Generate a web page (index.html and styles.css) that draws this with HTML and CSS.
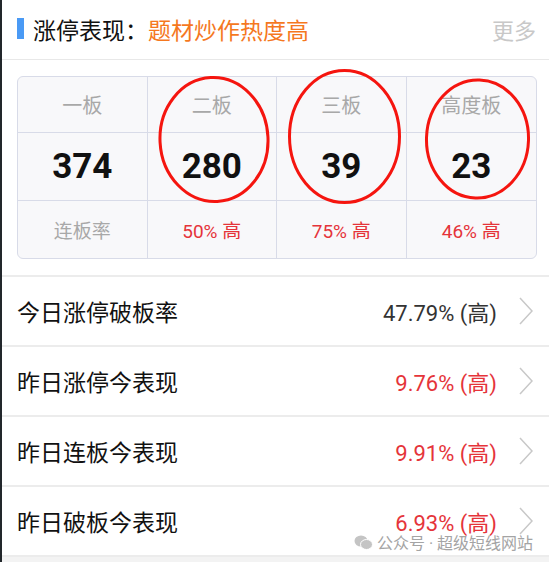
FILE: index.html
```html
<!DOCTYPE html>
<html>
<head>
  <meta charset="UTF-8">
  <title>涨停表现</title>
  <link rel="stylesheet" href="styles.css">
</head>
<body>
<div class="page">
  <div class="hd">
    <span class="bar"></span>
    <h1>涨停表现：<span>题材炒作热度高</span></h1>
    <a class="more" href="#">更多</a>
  </div>
  <div class="board">
    <div class="grid">
      <div class="cell lbl">一板</div>
      <div class="cell lbl">二板</div>
      <div class="cell lbl">三板</div>
      <div class="cell lbl last">高度板</div>
      <div class="cell num">374</div>
      <div class="cell num">280</div>
      <div class="cell num">39</div>
      <div class="cell num last">23</div>
      <div class="cell rate lbl">连板率</div>
      <div class="cell rate up">50% 高</div>
      <div class="cell rate up">75% 高</div>
      <div class="cell rate up last">46% 高</div>
    </div>
  </div>
  <ul class="list">
    <li><span class="name">今日涨停破板率</span><span class="val">47.79% (高)</span><svg class="arr" width="14" height="28" viewBox="0 0 14 28"><polyline points="1,1 13,14 1,27"/></svg></li>
    <li><span class="name">昨日涨停今表现</span><span class="val up">9.76% (高)</span><svg class="arr" width="14" height="28" viewBox="0 0 14 28"><polyline points="1,1 13,14 1,27"/></svg></li>
    <li><span class="name">昨日连板今表现</span><span class="val up">9.91% (高)</span><svg class="arr" width="14" height="28" viewBox="0 0 14 28"><polyline points="1,1 13,14 1,27"/></svg></li>
    <li><span class="name">昨日破板今表现</span><span class="val up">6.93% (高)</span><svg class="arr" width="14" height="28" viewBox="0 0 14 28"><polyline points="1,1 13,14 1,27"/></svg></li>
  </ul>
</div>
<svg class="marks" width="549" height="562" viewBox="0 0 549 562">
  <ellipse cx="214" cy="139.5" rx="54" ry="62" transform="rotate(-3 214 139.5)"/>
  <ellipse cx="344.5" cy="136.5" rx="55" ry="66"/>
  <ellipse cx="477.5" cy="139" rx="51" ry="59" transform="rotate(2 477.5 139)"/>
</svg>
<div class="wm">
  <svg width="19" height="15" viewBox="0 0 19 15"><ellipse cx="7" cy="6" rx="6.5" ry="5.5"/><ellipse cx="12.5" cy="9.5" rx="6" ry="5" fill="#c4c4c4" stroke="#fff" stroke-width="1"/></svg>
  <span>公众号 · 超级短线网站</span>
</div>
</body>
</html>
```

FILE: styles.css
```css
*{margin:0;padding:0;}
body{
  position:relative;
  background:#fff;
  color:#111;
  font-family:Roboto,"Noto Sans CJK SC",sans-serif;
}
.page{border-left:2px solid #22272b;min-height:562px;background:#f3f3f3;}
.hd{display:flex;align-items:center;padding:0 13px 2px 15px;background:#fff;border-bottom:1px solid #e8e8e8;box-sizing:border-box;height:60px;}
.bar{width:7px;height:21px;background:#4a9af5;margin-right:9px;}
h1{font-size:23px;font-weight:normal;flex:1;}
h1 span{color:#f5781e;}
.more{font-size:22px;color:#c8c8c8;text-decoration:none;}
.board{background:#fff;padding:16px 12px 16px 15px;}
.grid{display:grid;grid-template-columns:repeat(4,1fr);grid-template-rows:56px 68px 57px;background:#f8f8fa;border:1px solid #d8dbe8;border-radius:6px;}
.cell{display:flex;align-items:center;justify-content:center;border-right:1px solid #d8dbe8;border-bottom:1px solid #d8dbe8;}
.cell.last{border-right:0;}
.cell.rate{border-bottom:0;}
.lbl{font-size:20px;color:#a8a8a8;}
.num{font-size:35px;font-weight:bold;color:#111;}
.rate{font-size:19px;}
.up{color:#e5343a;}
.list{list-style:none;border-top:2px solid #ececec;}
.list li{display:flex;align-items:center;height:68px;padding:0 16px 0 15px;background:#fff;border-bottom:2px solid #ececec;}
.name{flex:1;font-size:23px;color:#111;}
.val{font-size:22px;color:#333;margin-right:22px;}
.val.up{color:#e5343a;}
.arr polyline{fill:none;stroke:#c8c8c8;stroke-width:1.5;}
.marks{position:absolute;left:0;top:0;pointer-events:none;}
.marks ellipse{fill:none;stroke:#f5150f;stroke-width:3;}
.wm{position:absolute;left:354px;top:530px;display:flex;align-items:center;gap:4px;font-size:16px;color:#a4a4a4;}
.wm ellipse{fill:#c4c4c4;}
```
